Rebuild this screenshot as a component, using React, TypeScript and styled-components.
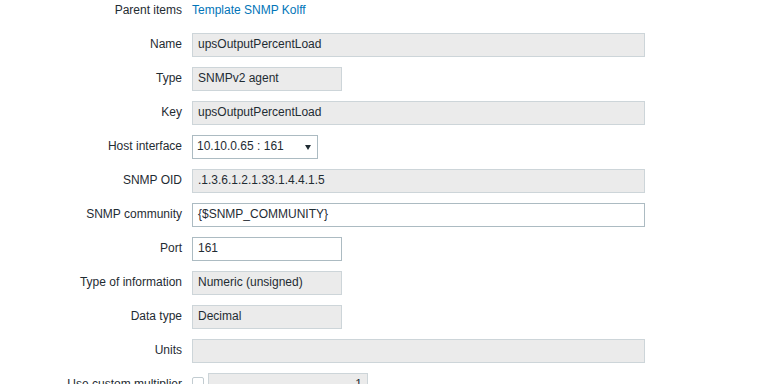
import React from "react";
import styled, { createGlobalStyle } from "styled-components";

const Global = createGlobalStyle`
  html, body { margin: 0; padding: 0; background: #ffffff; overflow: hidden; }
  body { font-family: Arial, "Liberation Sans", sans-serif; font-size: 12px; color: #1f2c33; }
`;

const Form = styled.div`
  display: flex;
  flex-direction: column;
  gap: 10px;
  width: 762px;
  height: 384px;
  overflow: hidden;
`;

const Row = styled.div<{ $first?: boolean }>`
  display: grid;
  grid-template-columns: 182px auto;
  column-gap: 10px;
  align-items: center;
  min-height: 24px;
  ${(p) => (p.$first ? "align-items: start; padding-top: 3px; min-height: 20px;" : "")}
`;

const Label = styled.div`
  text-align: right;
  line-height: 14px;
  padding-bottom: 2px;
  white-space: nowrap;
  color: #1f2c33;
`;

const Field = styled.div`
  display: flex;
  align-items: center;
  gap: 4px;
`;

const Link = styled.a`
  color: #0275b8;
  text-decoration: none;
  line-height: 14px;
`;

const Input = styled.div<{ $w: number; $ro?: boolean; $right?: boolean }>`
  box-sizing: border-box;
  width: ${(p) => p.$w}px;
  height: 24px;
  padding: 0 5px 2px;
  line-height: 20px;
  border: 1px solid ${(p) => (p.$ro ? "#cdd5d9" : "#acbbc2")};
  background: ${(p) => (p.$ro ? "#ebebeb" : "#ffffff")};
  color: #1f2c33;
  white-space: nowrap;
  overflow: hidden;
  text-align: ${(p) => (p.$right ? "right" : "left")};
`;

const Select = styled.div`
  box-sizing: border-box;
  width: 126px;
  height: 24px;
  padding: 0 6px 2px 4px;
  border: 1px solid #acbbc2;
  background: #ffffff;
  display: flex;
  align-items: center;
  justify-content: space-between;
  line-height: 20px;
`;

const Arrow = styled.svg`
  width: 6px;
  height: 5px;
  display: block;
  margin-top: 2px;
`;

const Check = styled.span`
  box-sizing: border-box;
  width: 12px;
  height: 12px;
  border: 1px solid #c2ccd1;
  border-radius: 2px;
  background: #ffffff;
  display: block;
  align-self: flex-start;
  margin-top: 4px;
`;

type R = { label: string; value: string; w: number; ro?: boolean };

const rows: R[] = [
  { label: "Name", value: "upsOutputPercentLoad", w: 453, ro: true },
  { label: "Type", value: "SNMPv2 agent", w: 150, ro: true },
  { label: "Key", value: "upsOutputPercentLoad", w: 453, ro: true },
];

const rows2: R[] = [
  { label: "SNMP OID", value: ".1.3.6.1.2.1.33.1.4.4.1.5", w: 453, ro: true },
  { label: "SNMP community", value: "{$SNMP_COMMUNITY}", w: 453 },
  { label: "Port", value: "161", w: 150 },
  { label: "Type of information", value: "Numeric (unsigned)", w: 150, ro: true },
  { label: "Data type", value: "Decimal", w: 150, ro: true },
  { label: "Units", value: "", w: 453, ro: true },
];

const renderRow = (r: R) => (
  <Row key={r.label}>
    <Label>{r.label}</Label>
    <Field>
      <Input $w={r.w} $ro={r.ro}>{r.value}</Input>
    </Field>
  </Row>
);

export default function App() {
  return (
    <>
      <Global />
      <Form>
        <Row $first>
          <Label>Parent items</Label>
          <Field>
            <Link href="#">Template SNMP Kolff</Link>
          </Field>
        </Row>
        {rows.map(renderRow)}
        <Row>
          <Label>Host interface</Label>
          <Field>
            <Select>
              <span>10.10.0.65 : 161</span>
              <Arrow viewBox="0 0 6 5">
                <path d="M0 0 H6 L3 5 Z" fill="#1f2c33" />
              </Arrow>
            </Select>
          </Field>
        </Row>
        {rows2.map(renderRow)}
        <Row>
          <Label>Use custom multiplier</Label>
          <Field>
            <Check />
            <Input $w={160} $ro $right>1</Input>
          </Field>
        </Row>
      </Form>
    </>
  );
}
